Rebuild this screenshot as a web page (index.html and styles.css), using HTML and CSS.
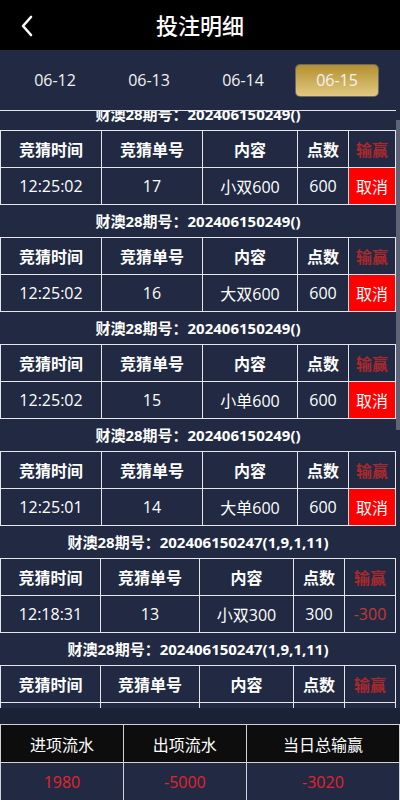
FILE: index.html
```html
<!DOCTYPE html>
<html lang="zh-CN">
<head>
  <meta charset="UTF-8" />
  <meta name="viewport" content="width=device-width, initial-scale=1.0"/>
  <title>投注明细</title>
  <link rel="stylesheet" href="styles.css">
</head>
<body>

<header class="topbar">
  <a class="back" href="#">
    <svg width="14" height="22" viewBox="0 0 14 22"><polyline points="11,2 3,11 11,20" fill="none" stroke="#fff" stroke-width="2.6" stroke-linecap="round" stroke-linejoin="round"/></svg>
  </a>
  <h1>投注明细</h1>
  <span></span>
</header>

<nav class="dates">
  <span class="date">06-12</span>
  <span class="date">06-13</span>
  <span class="date">06-14</span>
  <span class="date active">06-15</span>
</nav>

<!-- bet records, scrolled a little -->
<main class="records">
  <div class="record-list">

    <div class="record">
      <div class="issue">财澳28期号：202406150249()</div>
      <table class="bet">
        <tr><th>竞猜时间</th><th>竞猜单号</th><th>内容</th><th>点数</th><th class="result">输赢</th></tr>
        <tr><td>12:25:02</td><td>17</td><td>小双600</td><td>600</td><td class="cancel">取消</td></tr>
      </table>
    </div>

    <div class="record">
      <div class="issue">财澳28期号：202406150249()</div>
      <table class="bet">
        <tr><th>竞猜时间</th><th>竞猜单号</th><th>内容</th><th>点数</th><th class="result">输赢</th></tr>
        <tr><td>12:25:02</td><td>16</td><td>大双600</td><td>600</td><td class="cancel">取消</td></tr>
      </table>
    </div>

    <div class="record">
      <div class="issue">财澳28期号：202406150249()</div>
      <table class="bet">
        <tr><th>竞猜时间</th><th>竞猜单号</th><th>内容</th><th>点数</th><th class="result">输赢</th></tr>
        <tr><td>12:25:02</td><td>15</td><td>小单600</td><td>600</td><td class="cancel">取消</td></tr>
      </table>
    </div>

    <div class="record">
      <div class="issue">财澳28期号：202406150249()</div>
      <table class="bet">
        <tr><th>竞猜时间</th><th>竞猜单号</th><th>内容</th><th>点数</th><th class="result">输赢</th></tr>
        <tr><td>12:25:01</td><td>14</td><td>大单600</td><td>600</td><td class="cancel">取消</td></tr>
      </table>
    </div>

    <div class="record">
      <div class="issue">财澳28期号：202406150247(1,9,1,11)</div>
      <table class="bet settled">
        <tr><th>竞猜时间</th><th>竞猜单号</th><th>内容</th><th>点数</th><th class="result">输赢</th></tr>
        <tr><td>12:18:31</td><td>13</td><td>小双300</td><td>300</td><td class="loss">-300</td></tr>
      </table>
    </div>

    <div class="record">
      <div class="issue">财澳28期号：202406150247(1,9,1,11)</div>
      <table class="bet settled">
        <tr><th>竞猜时间</th><th>竞猜单号</th><th>内容</th><th>点数</th><th class="result">输赢</th></tr>
        <tr><td>12:18:30</td><td>12</td><td>大单300</td><td>300</td><td class="loss">-300</td></tr>
      </table>
    </div>

  </div>
  <div class="scroll-thumb"></div>
</main>

<footer class="summary">
  <table class="totals">
    <tr><th>进项流水</th><th>出项流水</th><th>当日总输赢</th></tr>
    <tr><td>1980</td><td>-5000</td><td>-3020</td></tr>
  </table>
</footer>

</body>
</html>
```

FILE: styles.css
```css
:root {
  --navy: #212a42;
  --navy-dark: #1a2238;
  --line: #e4e6ea;
}

* {
  margin: 0;
  padding: 0;
  box-sizing: border-box;
  font-family: 'Open Sans', 'Noto Sans CJK SC', sans-serif;
}

body {
  width: 400px;
  height: 800px;
  overflow: hidden;
  display: flex;
  flex-direction: column;
  background-color: var(--navy);
  color: #fff;
}

/* top bar */
.topbar {
  height: 50px;
  flex: none;
  background: #000;
  display: grid;
  grid-template-columns: 60px 1fr 60px;
  align-items: center;
}

.back {
  display: flex;
  padding-left: 20px;
  padding-top: 1px;
}

.topbar h1 {
  text-align: center;
  font-size: 22px;
  font-weight: 500;
  line-height: 50px;
}

/* date tabs */
.dates {
  height: 60px;
  flex: none;
  display: flex;
  align-items: center;
  gap: 12px;
  padding: 0 14px;
}

.date {
  width: 82px;
  height: 31px;
  line-height: 31px;
  text-align: center;
  font-size: 16px;
  color: #f2f2f2;
  border-radius: 4px;
}

.date.active {
  background: linear-gradient(to bottom, #b3902f, #e2c982);
  box-shadow: 0 0 0 1px rgba(240, 220, 160, 0.35);
}

/* records */
.records {
  height: 598px;
  flex: none;
  position: relative;
  overflow: hidden;
}

.record-list {
  margin-top: -12px;
  margin-right: 4px;
}

/* thin line at the top of the list */
.records::before {
  content: "";
  position: absolute;
  top: 0;
  left: 0;
  right: 4px;
  height: 1px;
  background: var(--line);
  z-index: 1;
}

.scroll-thumb {
  position: absolute;
  top: 10px;
  right: 0;
  width: 4px;
  height: 310px;
  background: #5e6475;
}

.issue {
  height: 32px;
  line-height: 32px;
  text-align: center;
  font-size: 15px;
  font-weight: 700;
}

table {
  width: 100%;
  border-collapse: collapse;
}

.bet th,
.bet td {
  border: 1px solid var(--line);
  height: 37px;
  padding: 0;
  text-align: center;
  font-size: 16px;
  white-space: nowrap;
}

.bet th {
  font-weight: 700;
}

.bet th:nth-child(1),
.bet th:nth-child(2) {
  width: 101px;
}

.bet th:nth-child(3) {
  width: 95px;
}

.bet th:nth-child(4) {
  width: 51px;
}

.bet.settled th:nth-child(1) {
  width: 100px;
}

.bet.settled th:nth-child(2) {
  width: 99px;
}

.bet.settled th:nth-child(3) {
  width: 94px;
}

.bet th.result {
  color: #a8292d;
}

.bet td.cancel {
  background: #ff0000;
  color: #fff;
}

.bet td.loss {
  color: #c23a35;
}

/* summary footer */
.summary {
  flex: 1;
  background: var(--navy-dark);
  padding-top: 16px;
}

.totals th,
.totals td {
  border: 1px solid #cfd2d8;
  height: 38px;
  text-align: center;
  font-size: 16px;
  font-weight: 400;
  white-space: nowrap;
}

.totals th {
  background: #0d0d0e;
}

.totals td {
  background: var(--navy);
  color: #e5232b;
}
```
